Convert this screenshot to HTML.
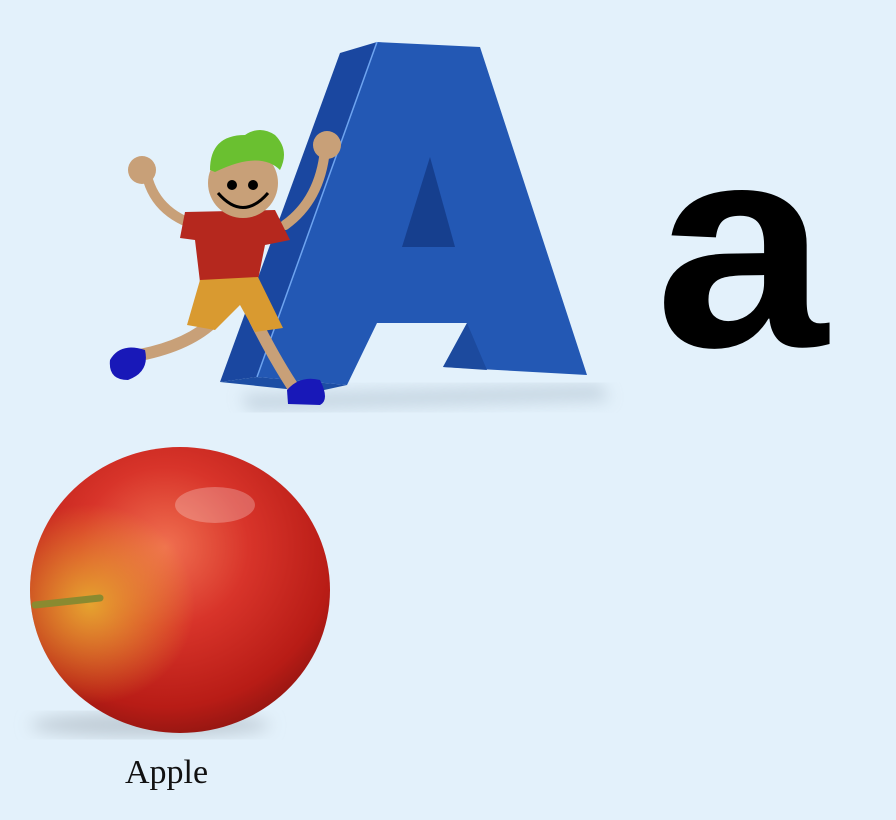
<!DOCTYPE html>
<html><head><style>
html,body{margin:0;padding:0;}
body{width:896px;height:820px;background:#e3f1fb;position:relative;overflow:hidden;font-family:"Liberation Sans",sans-serif;}
.a{position:absolute;left:655px;top:101px;font-family:"Liberation Sans",sans-serif;font-weight:bold;font-size:290px;line-height:1;color:#000;transform:scaleX(1.07);transform-origin:left top;}
.lbl{position:absolute;left:125px;top:754px;font-family:"Liberation Serif",serif;font-size:34px;color:#111;}
</style></head><body>
<svg width="896" height="820" style="position:absolute;left:0;top:0">
<defs>
<radialGradient id="ap" cx="0.45" cy="0.35" r="0.7">
<stop offset="0" stop-color="#f07050"/><stop offset="0.4" stop-color="#d8342a"/><stop offset="0.8" stop-color="#b81c16"/><stop offset="1" stop-color="#8a1410"/></radialGradient>
<radialGradient id="yl" cx="0.2" cy="0.55" r="0.35"><stop offset="0" stop-color="#e8b030" stop-opacity="0.9"/><stop offset="1" stop-color="#e8b030" stop-opacity="0"/></radialGradient>
<filter id="bl"><feGaussianBlur stdDeviation="8"/></filter>
</defs>
<path d="M240,395 L600,385 L610,400 L250,410Z" fill="#aebfcd" filter="url(#bl)" opacity="0.6"/>
<path d="M340,53 L377,42 L257,377 L220,382 Z" fill="#1a47a0"/>
<path d="M220,382 L257,377 L347,385 L315,392 Z" fill="#1d4ea4"/>
<path d="M377,42 L480,47 L587,375 L443,367 L467,323 L377,323 L347,385 L257,377 Z" fill="#2358b4"/>
<path d="M443,367 L467,323 L487,370 Z" fill="#1c4a9e"/>
<path d="M430,157 L402,247 L455,247 Z" fill="#163f8e"/>
<path d="M377,42 L257,377" stroke="#6ea4f0" stroke-width="1.5"/>
<g stroke-linecap="round" fill="none">
<path d="M145,165 Q150,210 195,225" stroke="#c8a078" stroke-width="10"/>
<path d="M325,150 Q320,200 285,225" stroke="#c8a078" stroke-width="10"/>
<path d="M215,320 Q190,345 140,355" stroke="#c8a078" stroke-width="12"/>
<path d="M255,320 Q275,360 295,390" stroke="#c8a078" stroke-width="12"/>
</g>
<circle cx="142" cy="170" r="14" fill="#c8a078"/>
<circle cx="327" cy="145" r="14" fill="#c8a078"/>
<path d="M185,212 L275,210 L290,240 L265,245 L258,280 L200,282 L195,240 L180,238Z" fill="#b5281e"/>
<path d="M200,280 L258,277 L283,328 L255,332 L240,305 L215,330 L187,325Z" fill="#d99a30"/>
<circle cx="243" cy="183" r="35" fill="#c8a078"/>
<path d="M210,170 Q210,135 245,135 Q260,125 275,135 Q290,150 280,170 Q260,150 215,172Z" fill="#6ac030"/>
<circle cx="232" cy="185" r="5" fill="#000"/><circle cx="253" cy="185" r="5" fill="#000"/>
<path d="M218,193 Q243,222 268,193" stroke="#000" stroke-width="3" fill="none"/>
<path d="M110,360 Q120,342 145,350 Q150,372 128,380 Q108,380 110,360Z" fill="#1818b8"/>
<path d="M287,390 Q300,375 320,380 Q330,400 320,405 L288,404Z" fill="#1818b8"/>
<ellipse cx="150" cy="725" rx="120" ry="12" fill="#c0ccd6" filter="url(#bl)"/>
<ellipse cx="180" cy="590" rx="150" ry="143" fill="url(#ap)"/>
<ellipse cx="180" cy="590" rx="150" ry="143" fill="url(#yl)"/>
<ellipse cx="215" cy="505" rx="40" ry="18" fill="#fff" opacity="0.25"/>
<path d="M35,605 L100,598" stroke="#8a8a30" stroke-width="7" stroke-linecap="round"/>
</svg>
<div class="a">a</div>
<div class="lbl">Apple</div>
</body></html>
